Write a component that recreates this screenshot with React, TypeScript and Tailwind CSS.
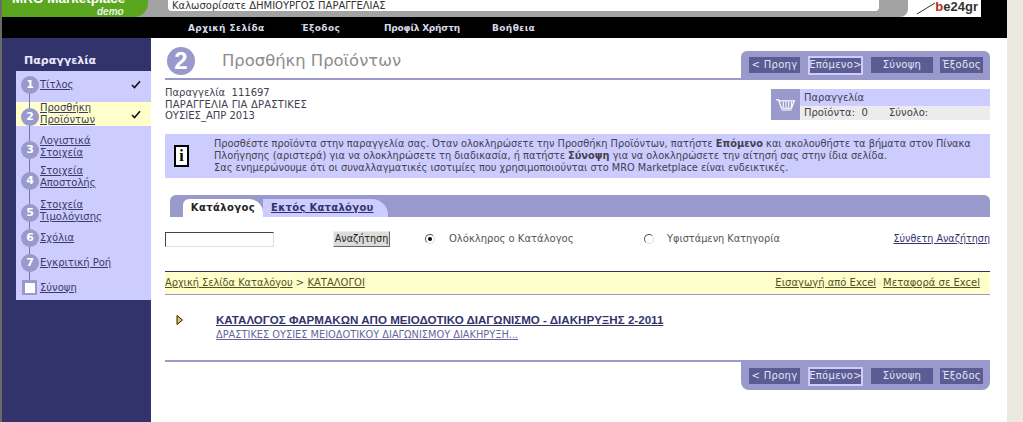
const STEPS = [
  { n: "1", lines: ["Τίτλος"], rowClass: "h-[31px]", circleClass: "mt-[5px]", textClass: "pt-[8px]", done: true, doneClass: "mt-[9px]" },
  { n: "2", lines: ["Προσθήκη", "Προϊόντων"], rowClass: "h-[24px] bg-[#ffffcc]", circleClass: "mt-[6px]", textClass: "pt-[0px]", done: true, doneClass: "mt-[8px]" },
  { n: "3", lines: ["Λογιστικά", "Στοιχεία"], rowClass: "h-[32px]", circleClass: "mt-[15px]", textClass: "pt-[9px]" },
  { n: "4", lines: ["Στοιχεία", "Αποστολής"], rowClass: "h-[32px]", circleClass: "mt-[14px]", textClass: "pt-[7px]" },
  { n: "5", lines: ["Στοιχεία", "Τιμολόγισης"], rowClass: "h-[32px]", circleClass: "mt-[14px]", textClass: "pt-[9px]" },
  { n: "6", lines: ["Σχόλια"], rowClass: "h-[25px]", circleClass: "mt-[7px]", textClass: "pt-[10px]" },
  { n: "7", lines: ["Εγκριτική Ροή"], rowClass: "h-[25px]", circleClass: "mt-[7px]", textClass: "pt-[10px]" },
];

function Check({ className }: { className?: string }) {
  return (
    <svg viewBox="0 0 10 9" className={className} width="10" height="9">
      <path d="M1 5 L3.5 7.5 L9 1.2" fill="none" stroke="#111" strokeWidth="1.6" />
    </svg>
  );
}

function Radio({ checked }: { checked?: boolean }) {
  return (
    <span className="flex h-[10px] w-[10px] shrink-0 items-center justify-center rounded-full border border-t-[#555] border-l-[#555] border-r-[#ddd] border-b-[#ddd] bg-white">
      {checked ? <span className="h-[4px] w-[4px] rounded-full bg-black" /> : null}
    </span>
  );
}

function NavButton({ label, className, active }: { label: string; className: string; active?: boolean }) {
  return (
    <span
      className={`flex items-center justify-center bg-[#5c5c94] text-[10px] tracking-[0.3px] text-[#e4e4f4] ${className} ${
        active ? "h-[19px] border-2 border-[#ccccff]" : "h-[16px]"
      }`}
    >
      {label}
    </span>
  );
}

function ButtonPanel({ className }: { className: string }) {
  return (
    <div className={`flex h-[28px] w-[249px] shrink-0 items-center bg-[#9999cc] pl-[8px] ${className}`}>
      <NavButton label="< Προηγ" className="w-[51px]" />
      <NavButton label="Επόμενο>" className="ml-[8px] w-[55px]" active />
      <NavButton label="Σύνοψη" className="ml-[8px] w-[62px]" />
      <NavButton label="Έξοδος" className="ml-[7px] w-[43px]" />
    </div>
  );
}

function Sidebar() {
  return (
    <aside className="flex w-[149px] shrink-0 flex-col bg-[#33336b] pl-[14px]">
      <div className="h-[33px] pl-[8px] pt-[16px] text-[11px] font-bold leading-[14px] text-[#e8e8ff]">Παραγγελία</div>
      <div className="relative h-[229px] bg-[#ccccff] text-[10px] leading-[12px] text-[#3c3a66]">
        <span className="absolute left-[13px] top-[14px] h-[205px] w-[1px] bg-[#77779f]" />
        {STEPS.map((s) => (
          <div key={s.n} className={`flex pl-[5px] ${s.rowClass}`}>
            <span
              className={`relative z-10 flex h-[18px] w-[18px] shrink-0 items-center justify-center rounded-full bg-[#9999cc] text-[11px] font-bold text-white ${s.circleClass}`}
            >
              {s.n}
            </span>
            <div className={`ml-[1px] w-[91px] underline ${s.textClass}`}>
              {s.lines.map((l) => (
                <div key={l}>{l}</div>
              ))}
            </div>
            {s.done ? <Check className={s.doneClass} /> : null}
          </div>
        ))}
        <div className="flex items-center pl-[6px] pt-[8px]">
          <span className="relative z-10 flex h-[15px] w-[15px] items-center justify-center bg-[#9999cc]">
            <span className="h-[10px] w-[10px] bg-white" />
          </span>
          <span className="ml-[3px] underline">Σύνοψη</span>
        </div>
      </div>
    </aside>
  );
}

export default function App() {
  return (
    <div className="flex h-[422px] w-[1023px] overflow-hidden bg-white font-['DejaVu_Sans',sans-serif] text-[10px] leading-[12px] text-[#44404c]">
      <div className="flex w-[1007px] shrink-0 flex-col border-l-2 border-l-[#6a6a6a]">
        {/* Banner */}
        <header className="flex h-[17px] shrink-0 bg-white">
          <div className="w-[146px] shrink-0 bg-[#a3a3a3]">
            <div className="relative h-full overflow-hidden rounded-br-[14px] bg-[#5aa61e] font-['Liberation_Sans',sans-serif] text-white">
              <div className="absolute left-[10px] top-[-10px] whitespace-nowrap text-[13.5px] font-bold leading-[18px]">MRO Marketplace</div>
              <div className="absolute left-[95px] top-[7px] text-[10px] font-bold italic leading-[10px] text-[#e8f0e0]">demo</div>
            </div>
          </div>
          <div className="flex w-[760px] shrink-0 rounded-br-[8px] bg-[#a3a3a3] pb-[6px] pl-[20px]">
            <div className="flex h-[11px] w-[711px] items-center rounded-b-[4px] bg-white pl-[4px] text-[10px] text-[#333]">
              Καλωσορίσατε ΔΗΜΙΟΥΡΓΟΣ ΠΑΡΑΓΓΕΛΙΑΣ
            </div>
          </div>
          <div className="flex w-[73px] shrink-0 items-start justify-end rounded-br-[6px] pr-[3px]">
            <svg viewBox="0 0 20 16" width="20" height="16" className="shrink-0">
              <path d="M2 14 L20 3" stroke="#333" strokeWidth="1" fill="none" />
            </svg>
            <span className="whitespace-nowrap font-['Liberation_Sans',sans-serif] text-[13px] font-bold leading-[13px] text-[#333]">
              <span className="text-[#b5301f]">b</span>e24gr
            </span>
          </div>
          <div className="flex-1 bg-black" />
        </header>
        <nav className="flex h-[21px] shrink-0 items-center bg-black pl-[186px] text-[9px] font-bold tracking-[0.4px] text-[#d8d8e8]">
          <span className="w-[113px]">Αρχική Σελίδα</span>
          <span className="w-[83px]">Έξοδος</span>
          <span className="w-[108px] tracking-[-0.2px]">Προφίλ Χρήστη</span>
          <span>Βοήθεια</span>
        </nav>

        <div className="flex min-h-0 flex-1">
          <Sidebar />
          <main className="flex w-[856px] flex-col pl-[14px] pr-[17px]">
            {/* Title */}
            <div className="flex h-[42px] shrink-0 items-end border-b-2 border-[#9999cc]">
              <span className="mb-[3px] ml-[2px] flex h-[28px] w-[28px] items-center justify-center rounded-full bg-[#9999cc] font-['Liberation_Sans',sans-serif] text-[24px] font-bold text-white">
                2
              </span>
              <h1 className="mb-[7px] ml-[27px] text-[16.4px] leading-[20px] text-[#8c8c8c]">Προσθήκη Προϊόντων</h1>
              <ButtonPanel className="mb-[-1px] ml-auto rounded-t-[6px]" />
            </div>

            {/* Order */}
            <div className="mt-[7px] flex h-[47px] shrink-0 justify-between">
              <div className="leading-[11.5px]">
                <div>Παραγγελία&nbsp; 111697</div>
                <div className="tracking-[0.2px]">ΠΑΡΑΓΓΕΛΙΑ ΓΙΑ ΔΡΑΣΤΙΚΕΣ</div>
                <div>ΟΥΣΙΕΣ_ΑΠΡ 2013</div>
              </div>
              <div className="mt-[2px] flex h-[31px] w-[219px]">
                <div className="flex w-[29px] items-center justify-center bg-[#9999cc]">
                  <svg viewBox="0 0 24 16" width="22" height="15">
                    <path d="M1 3 H4 L7 12 H18 L21 4 H5" fill="none" stroke="#fff" strokeWidth="1.4" />
                    <path d="M9 5 V11 M12 5 V11 M15 5 V11 M18 5 V11" stroke="#fff" strokeWidth="1.2" />
                    <path d="M7 14 H18" stroke="#fff" strokeWidth="1.2" />
                  </svg>
                </div>
                <div className="flex-1">
                  <div className="flex h-[17px] items-center bg-[#ccccff] pl-[4px]">Παραγγελία</div>
                  <div className="flex h-[14px] items-center bg-[#ececec] pl-[4px]">
                    <span className="w-[85px]">Προϊόντα:&nbsp; 0</span>
                    <span>Σύνολο:</span>
                  </div>
                </div>
              </div>
            </div>

            {/* Info */}
            <div className="flex h-[44px] shrink-0 items-center bg-[#ccccff] text-[9.8px] leading-[12px]">
              <span className="ml-[9px] flex h-[22px] w-[15px] shrink-0 items-center justify-center border-2 border-black bg-white font-['Liberation_Serif',serif] text-[16px] font-bold text-black">
                i
              </span>
              <p className="ml-[25px] whitespace-nowrap">
                Προσθέστε προϊόντα στην παραγγελία σας. Όταν ολοκληρώσετε την Προσθήκη Προϊόντων, πατήστε <b>Επόμενο</b> και ακολουθήστε τα βήματα στον Πίνακα
                <br />
                Πλοήγησης (αριστερά) για να ολοκληρώσετε τη διαδικασία, ή πατήστε <b>Σύνοψη</b> για να ολοκληρώσετε την αίτησή σας στην ίδια σελίδα.
                <br />
                Σας ενημερώνουμε ότι οι συναλλαγματικές ισοτιμίες που χρησιμοποιούνται στο MRO Marketplace είναι ενδεικτικές.
              </p>
            </div>

            {/* Tabs */}
            <div className="ml-[5px] mt-[17px] flex h-[22px] shrink-0 items-end rounded-t-[6px] bg-[#9999cc] pl-[13px] font-bold">
              <span className="flex h-[18px] w-[80px] items-center justify-center rounded-tl-[6px] rounded-tr-[14px] bg-white tracking-[0.4px] text-[#222]">
                Κατάλογος
              </span>
              <span className="flex h-[18px] w-[125px] items-center rounded-tr-[16px] bg-[#ccccff] pl-[8px] tracking-[0.3px] text-[#33336b] underline">
                Εκτός Καταλόγου
              </span>
            </div>

            {/* Search */}
            <div className="mt-[14px] flex h-[16px] shrink-0 items-center">
              <span className="h-[15px] w-[109px] border border-t-[#444] border-l-[#444] border-r-[#ddd] border-b-[#ddd] bg-white" />
              <span className="ml-[59px] flex h-[16px] w-[57px] items-center justify-center border border-r-[#666] border-b-[#666] border-t-[#eee] border-l-[#eee] bg-[#dcdcd8] text-[9.6px] text-[#222]">
                Αναζήτηση
              </span>
              <span className="ml-[35px]">
                <Radio checked />
              </span>
              <span className="ml-[14px] w-[195px] text-[#555]">Ολόκληρος ο Κατάλογος</span>
              <Radio />
              <span className="ml-[13px] text-[9.75px] text-[#555]">Υφιστάμενη Κατηγορία</span>
              <span className="ml-auto text-[9.6px] text-[#33336b] underline">Σύνθετη Αναζήτηση</span>
            </div>

            {/* Breadcrumb */}
            <div className="mt-[24px] flex h-[24px] shrink-0 items-center justify-between border-t border-b border-t-[#33336b] border-b-[#9999cc] bg-[#ffffcc] pr-[10px] text-[#55501f]">
              <span>
                <span className="text-[9.8px] underline">Αρχική Σελίδα Καταλόγου</span> &gt; <span className="underline">ΚΑΤΑΛΟΓΟΙ</span>
              </span>
              <span>
                <span className="underline">Εισαγωγή από Excel</span>
                <span className="ml-[7px] underline">Μεταφορά σε Excel</span>
              </span>
            </div>

            {/* Catalog */}
            <div className="flex h-[67px] shrink-0 border-b-2 border-[#9999cc] pl-[11px] pt-[18px]">
              <svg viewBox="0 0 7 10" width="7" height="10" className="mt-[2px] shrink-0">
                <path d="M1 0.5 L6.5 5 L1 9.5 Z" fill="#e8c23a" stroke="#222" strokeWidth="1" />
              </svg>
              <div className="ml-[33px]">
                <div className="whitespace-nowrap font-['Liberation_Sans',sans-serif] text-[11.6px] font-bold leading-[14px] text-[#33336b] underline">
                  ΚΑΤΑΛΟΓΟΣ ΦΑΡΜΑΚΩΝ ΑΠΟ ΜΕΙΟΔΟΤΙΚΟ ΔΙΑΓΩΝΙΣΜΟ - ΔΙΑΚΗΡΥΞΗΣ 2-2011
                </div>
                <div className="mt-[3px] whitespace-nowrap text-[9.8px] leading-[10px] text-[#66669a] underline">
                  ΔΡΑΣΤΙΚΕΣ ΟΥΣΙΕΣ ΜΕΙΟΔΟΤΙΚΟΥ ΔΙΑΓΩΝΙΣΜΟΥ ΔΙΑΚΗΡΥΞΗ...
                </div>
              </div>
            </div>
            <ButtonPanel className="ml-auto rounded-b-[8px]" />
          </main>
        </div>
      </div>
      <div className="w-[16px] shrink-0 bg-[#ece9e0]" />
    </div>
  );
}
